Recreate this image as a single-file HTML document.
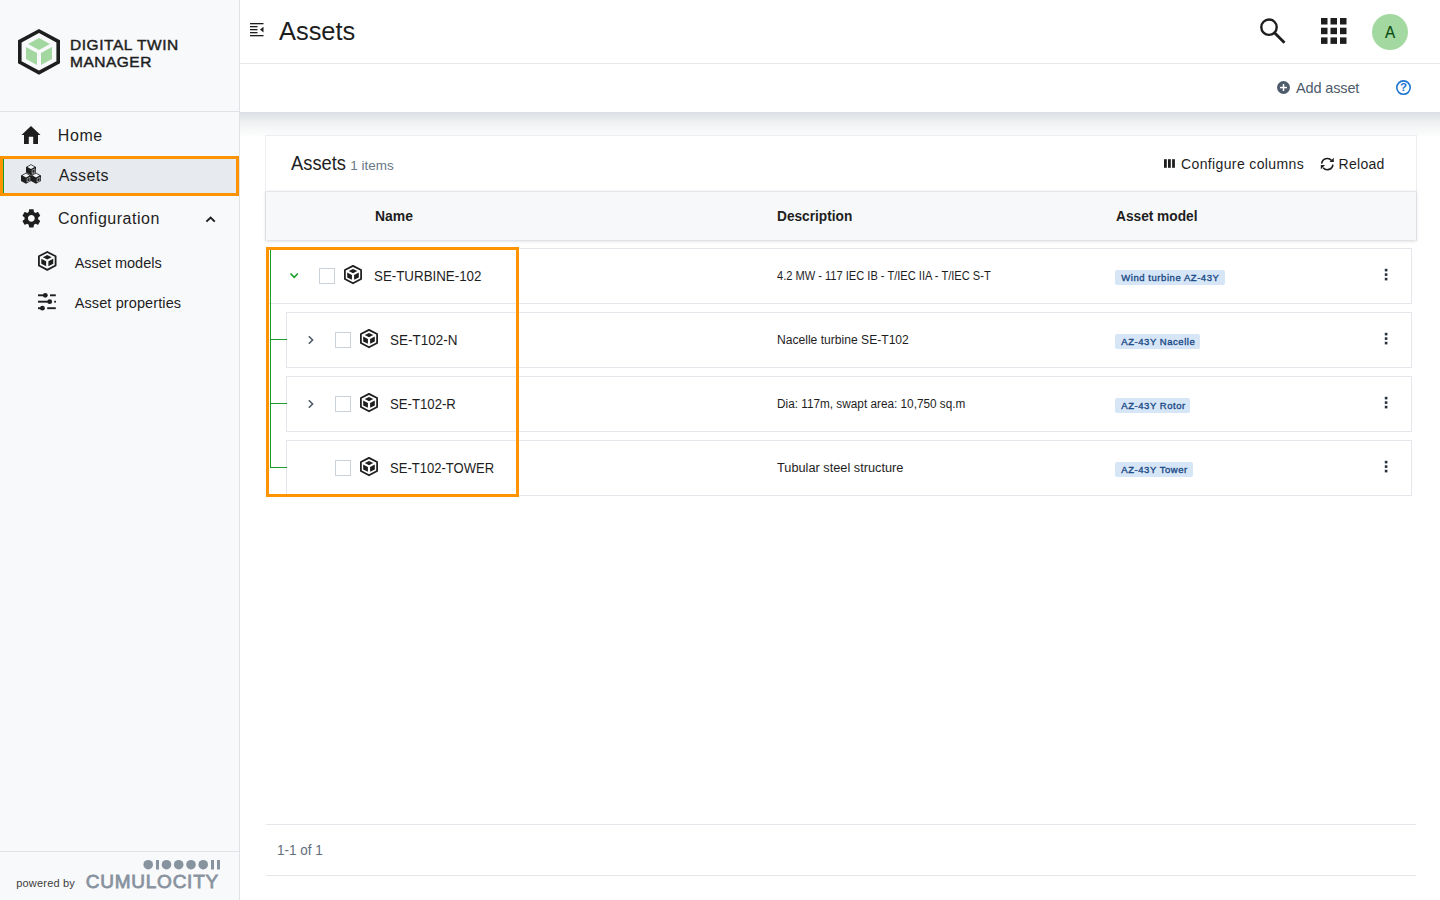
<!DOCTYPE html><html><head><meta charset="utf-8"><style>
*{margin:0;padding:0;box-sizing:border-box}
html,body{width:1440px;height:900px;overflow:hidden;background:#fff;font-family:"Liberation Sans",sans-serif}
.t{position:absolute;white-space:nowrap;line-height:1}
.a{position:absolute}
svg{position:absolute;overflow:visible}
</style></head><body>
<div class="a" style="left:0;top:0;width:240px;height:900px;background:#f8f9fa;border-right:1px solid #dfe2e6"></div>
<div class="a" style="left:0;top:111px;width:239px;height:1px;background:#dfe2e6"></div>
<div class="a" style="left:0;top:851px;width:239px;height:1px;background:#dfe2e6"></div>
<svg style="left:0;top:0" width="240" height="100">
<polygon points="39,31 58.2,41.4 58.2,62.3 39,72.7 19.8,62.3 19.8,41.4" fill="none" stroke="#1e1e1e" stroke-width="3.6" stroke-linejoin="miter"/>
<polygon points="39,38 50,44 39,50 28,44" fill="#a2d8a0"/>
<polygon points="26,47 37,53 37,65 26,59" fill="#a2d8a0"/>
<polygon points="52,47 41,53 41,65 52,59" fill="#a2d8a0"/>
</svg>
<div class="t" style="left:70.00px;top:37.48px;font-size:15.5px;font-weight:400;color:#1e1e1e;letter-spacing:0.55px;-webkit-text-stroke:0.45px #1e1e1e">DIGITAL TWIN</div>

<div class="t" style="left:70.00px;top:53.78px;font-size:15.5px;font-weight:400;color:#1e1e1e;letter-spacing:0.5px;-webkit-text-stroke:0.45px #1e1e1e">MANAGER</div>

<div class="a" style="left:0;top:156px;width:239px;height:40px;background:#e7eaee;border:3px solid #ff9400"></div>
<div class="a" style="left:3px;top:159px;width:1px;height:34px;background:#1a9e2a"></div>
<svg style="left:21px;top:125px" width="20" height="20" viewBox="0 0 20 20">
<path d="M10 1 L19.5 10 L17 10 L17 19 L12.2 19 L12.2 11.7 L7.8 11.7 L7.8 19 L3 19 L3 10 L0.5 10 Z" fill="#1e1e1e"/>
</svg>
<div class="t" style="left:57.80px;top:127.86px;font-size:16px;font-weight:400;color:#1e1e1e;letter-spacing:0.59px;">Home</div>

<svg style="left:0;top:0" width="60" height="200"><polygon points="31.00,164.20 36.00,167.00 36.00,172.50 31.00,175.30 26.00,172.50 26.00,167.00" fill="#1e1e1e"/><polygon points="31.00,165.10 34.60,167.00 31.00,168.90 27.40,167.00" fill="#eef0f3"/><polygon points="32.10,170.20 34.90,168.80 34.90,172.20 32.10,173.60" fill="none" stroke="#eef0f3" stroke-width="0.7" opacity="0.75"/><polygon points="26.00,172.70 31.00,175.50 31.00,181.00 26.00,183.80 21.00,181.00 21.00,175.50" fill="#1e1e1e"/><polygon points="26.00,173.60 29.60,175.50 26.00,177.40 22.40,175.50" fill="#eef0f3"/><polygon points="27.10,178.70 29.90,177.30 29.90,180.70 27.10,182.10" fill="none" stroke="#eef0f3" stroke-width="0.7" opacity="0.75"/><polygon points="36.00,172.70 41.00,175.50 41.00,181.00 36.00,183.80 31.00,181.00 31.00,175.50" fill="#1e1e1e"/><polygon points="36.00,173.60 39.60,175.50 36.00,177.40 32.40,175.50" fill="#eef0f3"/><polygon points="37.10,178.70 39.90,177.30 39.90,180.70 37.10,182.10" fill="none" stroke="#eef0f3" stroke-width="0.7" opacity="0.75"/></svg>
<div class="t" style="left:58.70px;top:167.86px;font-size:16px;font-weight:400;color:#1e1e1e;letter-spacing:0.35px;">Assets</div>

<svg style="left:19.6px;top:207.3px" width="22.7" height="22.7" viewBox="0 0 24 24">
<path fill="#1e1e1e" d="M19.14 12.94c.04-.3.06-.61.06-.94 0-.32-.02-.64-.07-.94l2.03-1.58c.18-.14.23-.41.12-.61l-1.92-3.32c-.12-.22-.37-.29-.59-.22l-2.39.96c-.5-.38-1.03-.7-1.62-.94l-.36-2.54c-.04-.24-.24-.41-.48-.41h-3.84c-.24 0-.43.17-.47.41l-.36 2.54c-.59.24-1.13.57-1.62.94l-2.39-.96c-.22-.08-.47 0-.59.22L2.74 8.87c-.12.21-.08.47.12.61l2.03 1.58c-.05.3-.09.63-.09.94s.02.64.07.94l-2.030 1.58c-.18.14-.23.41-.12.61l1.92 3.32c.12.22.37.29.59.22l2.39-.96c.5.38 1.03.7 1.62.94l.36 2.54c.05.24.24.41.48.41h3.84c.24 0 .44-.17.47-.41l.36-2.54c.59-.24 1.13-.56 1.62-.94l2.39.96c.22.08.47 0 .59-.22l1.92-3.32c.12-.22.07-.47-.12-.61l-2.01-1.58zM12 15.6c-1.98 0-3.6-1.62-3.6-3.6s1.62-3.6 3.6-3.6 3.6 1.62 3.6 3.6-1.62 3.6-3.6 3.6z"/>
</svg>
<div class="t" style="left:57.90px;top:211.36px;font-size:16px;font-weight:400;color:#1e1e1e;letter-spacing:0.53px;">Configuration</div>

<svg style="left:0;top:0" width="240" height="240"><polyline points="206.4,221.7 210.6,217.5 214.8,221.7" fill="none" stroke="#1e1e1e" stroke-width="1.9"/></svg>
<svg style="left:37.7px;top:251.4px" width="18.54" height="19.776" viewBox="0 0 18 19.2"><polygon points="9,0.9 17.1,5.1 17.1,14.1 9,18.3 0.9,14.1 0.9,5.1" fill="none" stroke="#1e1e1e" stroke-width="1.75" stroke-linejoin="round"/><polygon points="9,3.9 13.3,6.1 9,8.3 4.7,6.1" fill="#1e1e1e"/><polygon points="3.2,7.6 7.9,10.0 7.9,14.8 3.2,12.4" fill="#1e1e1e"/><polygon points="14.8,7.6 10.1,10.0 10.1,14.8 14.8,12.4" fill="#1e1e1e"/></svg>
<div class="t" style="left:74.70px;top:255.63px;font-size:14.5px;font-weight:400;color:#1e1e1e;letter-spacing:0px;">Asset models</div>

<svg style="left:0;top:0" width="240" height="330">
<g stroke="#1e1e1e" stroke-width="1.9" fill="#1e1e1e">
<line x1="38" y1="295.3" x2="45" y2="295.3"/><circle cx="45.3" cy="295.3" r="2.4" stroke="none"/><line x1="50" y1="295.3" x2="55.8" y2="295.3"/>
<line x1="38" y1="301.7" x2="49" y2="301.7"/><circle cx="49.7" cy="301.7" r="2.4" stroke="none"/><rect x="54.2" y="300.8" width="1.8" height="1.8" stroke="none"/>
<line x1="38" y1="308.2" x2="42" y2="308.2"/><circle cx="42.4" cy="308.2" r="2.4" stroke="none"/><line x1="47.2" y1="308.2" x2="55.8" y2="308.2"/>
</g></svg>
<div class="t" style="left:74.70px;top:295.53px;font-size:14.5px;font-weight:400;color:#1e1e1e;letter-spacing:0.11px;">Asset properties</div>

<div class="t" style="left:16.20px;top:878.19px;font-size:11px;font-weight:400;color:#3c3c3c;letter-spacing:0.2px;">powered by</div>

<svg style="left:0;top:0" width="240" height="900"><g fill="#8893a0">
<circle cx="148.2" cy="864.7" r="4.8"/><rect x="156" y="860" width="3" height="9.5"/>
<circle cx="166.5" cy="864.7" r="4.8"/><circle cx="178.7" cy="864.7" r="4.8"/>
<circle cx="191" cy="864.7" r="4.8"/><circle cx="203.2" cy="864.7" r="4.8"/>
<rect x="211" y="860" width="3" height="9.5"/><rect x="217" y="860" width="3" height="9.5"/>
</g></svg>
<div class="t" style="left:85.80px;top:872.42px;font-size:19px;font-weight:400;color:#8893a0;letter-spacing:0.75px;-webkit-text-stroke:0.8px #8893a0">CUMULOCITY</div>

<div class="a" style="left:240px;top:63px;width:1200px;height:1px;background:#e6e8eb"></div>
<svg style="left:0;top:0" width="300" height="60"><g fill="#1e1e1e">
<rect x="250" y="23" width="13.5" height="1.3"/><rect x="250" y="26" width="7.5" height="1.3"/>
<rect x="250" y="29" width="7.5" height="1.3"/><rect x="250" y="32" width="7.5" height="1.3"/>
<rect x="250" y="35" width="13.5" height="1.3"/><polygon points="263.5,26.8 263.5,32.4 260,29.6"/>
</g></svg>
<div class="t" style="left:279.00px;top:18.07px;font-size:26.5px;font-weight:400;color:#1e1e1e;letter-spacing:0px;transform:scaleX(0.9587);transform-origin:0 0;">Assets</div>

<svg style="left:0;top:0" width="1440" height="60">
<circle cx="1269" cy="27.2" r="7.7" fill="none" stroke="#1e1e1e" stroke-width="2.4"/>
<line x1="1274.5" y1="32.7" x2="1284.5" y2="42.7" stroke="#1e1e1e" stroke-width="2.8"/>
<g fill="#1e1e1e">
<rect x="1321" y="18" width="6.5" height="6.5"/><rect x="1330.5" y="18" width="6.5" height="6.5"/><rect x="1340" y="18" width="6.5" height="6.5"/>
<rect x="1321" y="27.7" width="6.5" height="6.5"/><rect x="1330.5" y="27.7" width="6.5" height="6.5"/><rect x="1340" y="27.7" width="6.5" height="6.5"/>
<rect x="1321" y="37.4" width="6.5" height="6.5"/><rect x="1330.5" y="37.4" width="6.5" height="6.5"/><rect x="1340" y="37.4" width="6.5" height="6.5"/>
</g>
<circle cx="1390" cy="32" r="18" fill="#a3d8a1"/>
</svg>
<div class="t" style="left:1384.90px;top:24.03px;font-size:16.5px;font-weight:400;color:#0b4d10;letter-spacing:0px;-webkit-text-stroke:0.2px #0b4d10;transform:scaleX(0.9273);transform-origin:0 0;">A</div>

<div class="a" style="left:240px;top:112px;width:1200px;height:24px;background:linear-gradient(#dcdfe4 0,#e5e8eb 22%,#eff1f3 45%,#f6f7f8 70%,#fcfcfc 100%)"></div>
<svg style="left:0;top:0" width="1440" height="120">
<circle cx="1283.5" cy="87.5" r="6.5" fill="#4d5b6a"/>
<rect x="1280" y="86.8" width="7" height="1.5" fill="#fff"/><rect x="1282.75" y="84" width="1.5" height="7" fill="#fff"/>
<circle cx="1403.5" cy="87.6" r="6.7" fill="none" stroke="#1f76d2" stroke-width="1.6"/>
</svg>
<div class="t" style="left:1296.00px;top:80.53px;font-size:14.5px;font-weight:400;color:#4d5b6a;letter-spacing:-0.14px;">Add asset</div>

<div class="t" style="left:1400.10px;top:82.27px;font-size:11.5px;font-weight:700;color:#1f76d2;letter-spacing:0px;">?</div>

<div class="a" style="left:265px;top:135px;width:1152px;height:106px;border:1px solid #eceef1;border-bottom:none;background:#fff"></div>
<div class="a" style="left:266px;top:191px;width:1150px;height:49px;background:#f7f8fa;border-top:1px solid #e3e6ea;box-shadow:0 1px 3px rgba(40,50,70,0.22)"></div>
<div class="t" style="left:290.90px;top:154.19px;font-size:19.5px;font-weight:400;color:#1e1e1e;letter-spacing:0px;transform:scaleX(0.9393);transform-origin:0 0;">Assets</div>

<div class="t" style="left:350.20px;top:158.57px;font-size:13.5px;font-weight:400;color:#6a7888;letter-spacing:0.01px;">1 items</div>

<svg style="left:0;top:0" width="1440" height="200"><g fill="#1e1e1e">
<rect x="1164" y="159.2" width="2.8" height="8.6"/><rect x="1168" y="159.2" width="2.8" height="8.6"/><rect x="1172.1" y="159.2" width="2.8" height="8.6"/>
</g>
<path d="M1321.7 163.6 A5.6 5.6 0 0 1 1331.6 160.6" fill="none" stroke="#1e1e1e" stroke-width="1.6"/>
<path d="M1332.9 164.6 A5.6 5.6 0 0 1 1323.1 167.7" fill="none" stroke="#1e1e1e" stroke-width="1.6"/>
<polygon points="1333.8,157.8 1333.8,162.1 1329.5,162.1" fill="#1e1e1e"/>
<polygon points="1320.8,169.2 1320.8,164.9 1325.1,164.9" fill="#1e1e1e"/>
</svg>
<div class="t" style="left:1181.00px;top:156.85px;font-size:14px;font-weight:400;color:#1e1e1e;letter-spacing:0.37px;">Configure columns</div>

<div class="t" style="left:1338.60px;top:156.85px;font-size:14px;font-weight:400;color:#1e1e1e;letter-spacing:0.27px;">Reload</div>

<div class="t" style="left:374.70px;top:208.53px;font-size:14.5px;font-weight:700;color:#1e1e1e;letter-spacing:0px;transform:scaleX(0.9612);transform-origin:0 0;">Name</div>

<div class="t" style="left:776.50px;top:208.53px;font-size:14.5px;font-weight:700;color:#1e1e1e;letter-spacing:0px;transform:scaleX(0.9441);transform-origin:0 0;">Description</div>

<div class="t" style="left:1115.75px;top:208.63px;font-size:14.5px;font-weight:700;color:#1e1e1e;letter-spacing:0px;transform:scaleX(0.9449);transform-origin:0 0;">Asset model</div>

<div class="a" style="left:266px;top:248px;width:1146px;height:56px;border:1px solid #e3e6ea;background:#fff"></div>
<svg style="left:0;top:0" width="400" height="500"><polyline points="290.5,273.5 294.2,277.3 297.9,273.5" fill="none" stroke="#1a9e2a" stroke-width="1.6"/></svg>
<div class="a" style="left:319px;top:268px;width:16px;height:16px;border:1px solid #ccd2d9;background:#fff"></div>
<svg style="left:344px;top:265.3px" width="18.0" height="19.2" viewBox="0 0 18 19.2"><polygon points="9,0.9 17.1,5.1 17.1,14.1 9,18.3 0.9,14.1 0.9,5.1" fill="none" stroke="#1e1e1e" stroke-width="1.75" stroke-linejoin="round"/><polygon points="9,3.9 13.3,6.1 9,8.3 4.7,6.1" fill="#1e1e1e"/><polygon points="3.2,7.6 7.9,10.0 7.9,14.8 3.2,12.4" fill="#1e1e1e"/><polygon points="14.8,7.6 10.1,10.0 10.1,14.8 14.8,12.4" fill="#1e1e1e"/></svg>
<div class="t" style="left:373.70px;top:267.88px;font-size:15.5px;font-weight:400;color:#1e1e1e;letter-spacing:0px;transform:scaleX(0.8602);transform-origin:0 0;">SE-TURBINE-102</div>

<div class="t" style="left:777.10px;top:269.84px;font-size:12px;font-weight:400;color:#1e1e1e;letter-spacing:0px;transform:scaleX(0.9235);transform-origin:0 0;">4.2 MW - 117 IEC IB - T/IEC IIA - T/IEC S-T</div>

<div class="a" style="left:1115px;top:270px;width:110px;height:15px;background:#d7e6f7;border-radius:2px"></div>
<div class="t" style="left:1121.30px;top:273.36px;font-size:9.5px;font-weight:400;color:#1a4a86;letter-spacing:0.55px;-webkit-text-stroke:0.35px #1a4a86">Wind turbine AZ-43Y</div>

<svg style="left:0;top:0" width="1440" height="500"><g fill="#26313d"><rect x="1384.8" y="268.8" width="2.6" height="2.6"/><rect x="1384.8" y="273.3" width="2.6" height="2.6"/><rect x="1384.8" y="277.8" width="2.6" height="2.6"/></g></svg>
<div class="a" style="left:286px;top:312px;width:1126px;height:56px;border:1px solid #e3e6ea;background:#fff"></div>
<svg style="left:0;top:0" width="400" height="500"><polyline points="308.8,336.2 312.6,340 308.8,343.8" fill="none" stroke="#4d5b6a" stroke-width="1.6"/></svg>
<div class="a" style="left:335px;top:332px;width:16px;height:16px;border:1px solid #ccd2d9;background:#fff"></div>
<svg style="left:360px;top:329.3px" width="18.0" height="19.2" viewBox="0 0 18 19.2"><polygon points="9,0.9 17.1,5.1 17.1,14.1 9,18.3 0.9,14.1 0.9,5.1" fill="none" stroke="#1e1e1e" stroke-width="1.75" stroke-linejoin="round"/><polygon points="9,3.9 13.3,6.1 9,8.3 4.7,6.1" fill="#1e1e1e"/><polygon points="3.2,7.6 7.9,10.0 7.9,14.8 3.2,12.4" fill="#1e1e1e"/><polygon points="14.8,7.6 10.1,10.0 10.1,14.8 14.8,12.4" fill="#1e1e1e"/></svg>
<div class="t" style="left:389.70px;top:331.88px;font-size:15.5px;font-weight:400;color:#1e1e1e;letter-spacing:0px;transform:scaleX(0.8699);transform-origin:0 0;">SE-T102-N</div>

<div class="t" style="left:777.10px;top:333.84px;font-size:12px;font-weight:400;color:#1e1e1e;letter-spacing:0px;transform:scaleX(1.0083);transform-origin:0 0;">Nacelle turbine SE-T102</div>

<div class="a" style="left:1115px;top:334px;width:85px;height:15px;background:#d7e6f7;border-radius:2px"></div>
<div class="t" style="left:1121.30px;top:337.36px;font-size:9.5px;font-weight:400;color:#1a4a86;letter-spacing:0.55px;-webkit-text-stroke:0.35px #1a4a86">AZ-43Y Nacelle</div>

<svg style="left:0;top:0" width="1440" height="500"><g fill="#26313d"><rect x="1384.8" y="332.8" width="2.6" height="2.6"/><rect x="1384.8" y="337.3" width="2.6" height="2.6"/><rect x="1384.8" y="341.8" width="2.6" height="2.6"/></g></svg>
<div class="a" style="left:286px;top:376px;width:1126px;height:56px;border:1px solid #e3e6ea;background:#fff"></div>
<svg style="left:0;top:0" width="400" height="500"><polyline points="308.8,400.2 312.6,404 308.8,407.8" fill="none" stroke="#4d5b6a" stroke-width="1.6"/></svg>
<div class="a" style="left:335px;top:396px;width:16px;height:16px;border:1px solid #ccd2d9;background:#fff"></div>
<svg style="left:360px;top:393.3px" width="18.0" height="19.2" viewBox="0 0 18 19.2"><polygon points="9,0.9 17.1,5.1 17.1,14.1 9,18.3 0.9,14.1 0.9,5.1" fill="none" stroke="#1e1e1e" stroke-width="1.75" stroke-linejoin="round"/><polygon points="9,3.9 13.3,6.1 9,8.3 4.7,6.1" fill="#1e1e1e"/><polygon points="3.2,7.6 7.9,10.0 7.9,14.8 3.2,12.4" fill="#1e1e1e"/><polygon points="14.8,7.6 10.1,10.0 10.1,14.8 14.8,12.4" fill="#1e1e1e"/></svg>
<div class="t" style="left:389.70px;top:395.88px;font-size:15.5px;font-weight:400;color:#1e1e1e;letter-spacing:0px;transform:scaleX(0.8496);transform-origin:0 0;">SE-T102-R</div>

<div class="t" style="left:777.10px;top:397.84px;font-size:12px;font-weight:400;color:#1e1e1e;letter-spacing:0px;transform:scaleX(0.9819);transform-origin:0 0;">Dia: 117m, swapt area: 10,750 sq.m</div>

<div class="a" style="left:1115px;top:398px;width:75px;height:15px;background:#d7e6f7;border-radius:2px"></div>
<div class="t" style="left:1121.30px;top:401.36px;font-size:9.5px;font-weight:400;color:#1a4a86;letter-spacing:0.55px;-webkit-text-stroke:0.35px #1a4a86">AZ-43Y Rotor</div>

<svg style="left:0;top:0" width="1440" height="500"><g fill="#26313d"><rect x="1384.8" y="396.8" width="2.6" height="2.6"/><rect x="1384.8" y="401.3" width="2.6" height="2.6"/><rect x="1384.8" y="405.8" width="2.6" height="2.6"/></g></svg>
<div class="a" style="left:286px;top:440px;width:1126px;height:56px;border:1px solid #e3e6ea;background:#fff"></div>
<div class="a" style="left:335px;top:460px;width:16px;height:16px;border:1px solid #ccd2d9;background:#fff"></div>
<svg style="left:360px;top:457.3px" width="18.0" height="19.2" viewBox="0 0 18 19.2"><polygon points="9,0.9 17.1,5.1 17.1,14.1 9,18.3 0.9,14.1 0.9,5.1" fill="none" stroke="#1e1e1e" stroke-width="1.75" stroke-linejoin="round"/><polygon points="9,3.9 13.3,6.1 9,8.3 4.7,6.1" fill="#1e1e1e"/><polygon points="3.2,7.6 7.9,10.0 7.9,14.8 3.2,12.4" fill="#1e1e1e"/><polygon points="14.8,7.6 10.1,10.0 10.1,14.8 14.8,12.4" fill="#1e1e1e"/></svg>
<div class="t" style="left:389.70px;top:459.88px;font-size:15.5px;font-weight:400;color:#1e1e1e;letter-spacing:0px;transform:scaleX(0.8410);transform-origin:0 0;">SE-T102-TOWER</div>

<div class="t" style="left:777.10px;top:461.84px;font-size:12px;font-weight:400;color:#1e1e1e;letter-spacing:0px;transform:scaleX(1.0632);transform-origin:0 0;">Tubular steel structure</div>

<div class="a" style="left:1115px;top:462px;width:78px;height:15px;background:#d7e6f7;border-radius:2px"></div>
<div class="t" style="left:1121.30px;top:465.36px;font-size:9.5px;font-weight:400;color:#1a4a86;letter-spacing:0.55px;-webkit-text-stroke:0.35px #1a4a86">AZ-43Y Tower</div>

<svg style="left:0;top:0" width="1440" height="500"><g fill="#26313d"><rect x="1384.8" y="460.8" width="2.6" height="2.6"/><rect x="1384.8" y="465.3" width="2.6" height="2.6"/><rect x="1384.8" y="469.8" width="2.6" height="2.6"/></g></svg>
<div class="a" style="left:270px;top:250px;width:1.3px;height:218px;background:#1a9e2a"></div>
<div class="a" style="left:270px;top:339px;width:17px;height:1.3px;background:#1a9e2a"></div>
<div class="a" style="left:270px;top:403px;width:17px;height:1.3px;background:#1a9e2a"></div>
<div class="a" style="left:270px;top:467px;width:17px;height:1.3px;background:#1a9e2a"></div>
<div class="a" style="left:266px;top:247px;width:253px;height:250px;border:3px solid #ff9400"></div>
<div class="a" style="left:266px;top:824px;width:1150px;height:1px;background:#e3e6ea"></div>
<div class="a" style="left:266px;top:875px;width:1150px;height:1px;background:#e3e6ea"></div>
<div class="t" style="left:277.00px;top:842.30px;font-size:15px;font-weight:400;color:#5f6d7c;letter-spacing:0px;transform:scaleX(0.9006);transform-origin:0 0;">1-1 of 1</div>

</body></html>
